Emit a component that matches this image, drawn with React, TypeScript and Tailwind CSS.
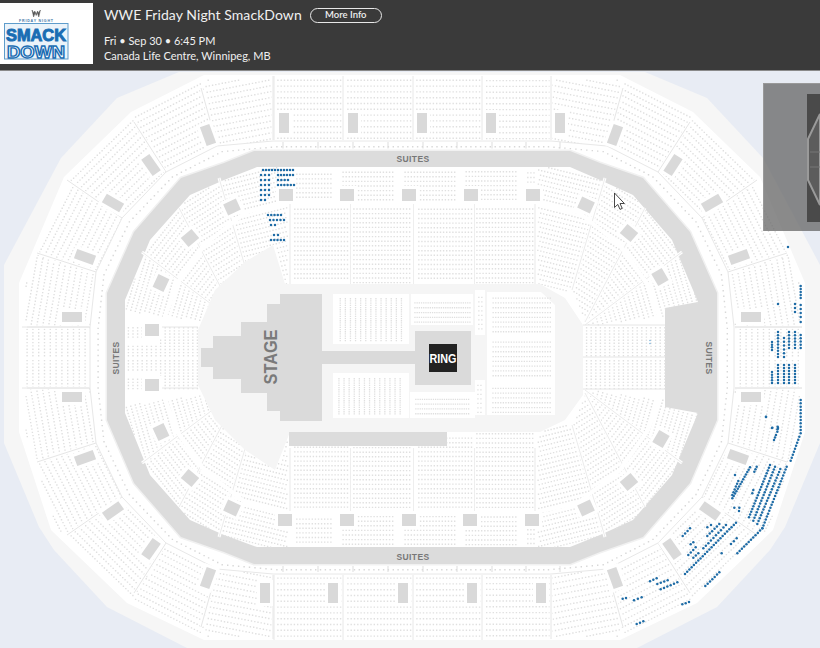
import { useMemo } from "react";

type P = [number, number];

const CX = 412;
const CY = 357.5;

const inPoly = (p: P, poly: P[]) => {
  let inside = false;
  for (let i = 0, j = poly.length - 1; i < poly.length; j = i++) {
    const [xi, yi] = poly[i];
    const [xj, yj] = poly[j];
    if (yi > p[1] !== yj > p[1] && p[0] < ((xj - xi) * (p[1] - yi)) / (yj - yi) + xi) inside = !inside;
  }
  return inside;
};

// rotated seat grid clipped to a polygon
const grid = (poly: P[], angle: number, along: number, across: number): P[] => {
  const rad = (angle * Math.PI) / 180;
  const ux = Math.cos(rad);
  const uy = Math.sin(rad);
  const out: P[] = [];
  const x0 = poly.reduce((s, p) => s + p[0], 0) / poly.length;
  const y0 = poly.reduce((s, p) => s + p[1], 0) / poly.length;
  const r = Math.max(...poly.map((p) => Math.hypot(p[0] - x0, p[1] - y0))) + 6;
  for (let a = -r; a <= r; a += along) {
    for (let b = -r; b <= r; b += across) {
      const p: P = [x0 + a * ux - b * uy, y0 + a * uy + b * ux];
      if (inPoly(p, poly)) out.push(p);
    }
  }
  return out;
};

const rect = (x1: number, y1: number, x2: number, y2: number): P[] => [
  [x1, y1],
  [x2, y1],
  [x2, y2],
  [x1, y2],
];

const pts = (poly: P[]) => poly.map((p) => p.join(",")).join(" ");

const mirrorRight = (half: P[]): P[] => [...half, ...[...half].reverse().map((p): P => [2 * CX - p[0], p[1]])];

// outline of the arena, clockwise from the top
const outerBand = mirrorRight([
  [645, 72],
  [707, 98],
  [763, 158],
  [820, 265],
  [820, 443],
  [785, 527],
  [770, 550],
  [717, 607],
  [637, 648],
]);
const seatArea = mirrorRight([
  [620, 75],
  [693, 112],
  [760, 177],
  [805, 283],
  [805, 432],
  [773, 530],
  [697, 603],
  [620, 640],
]);
const boxOuter = mirrorRight([
  [551, 141],
  [607, 146],
  [658, 172],
  [702, 218],
  [728, 272],
  [734, 327],
  [734, 388],
  [728, 443],
  [702, 497],
  [658, 543],
  [607, 569],
  [551, 574],
]);
const ringOuter = mirrorRight([
  [570, 151],
  [600, 163],
  [643, 178],
  [690, 232],
  [717, 293],
  [717, 420],
  [690, 483],
  [643, 537],
  [600, 552],
  [570, 564],
]);
const ringInner: P[] = [
  [257, 167],
  [570, 167],
  [600, 180],
  [633, 195],
  [672, 240],
  [698, 302],
  [665, 308],
  [665, 407],
  [698, 413],
  [672, 475],
  [633, 520],
  [600, 535],
  [570, 547],
  [257, 547],
  [224, 535],
  [190, 520],
  [150, 475],
  [125, 413],
  [125, 300],
  [150, 240],
  [190, 195],
  [224, 180],
];
const floor: P[] = [
  [273, 245],
  [285, 284],
  [540, 284],
  [565, 298],
  [583, 325],
  [583, 395],
  [565, 420],
  [540, 432],
  [290, 432],
  [275, 470],
  [245, 450],
  [215, 420],
  [198, 385],
  [198, 330],
  [215, 290],
  [245, 262],
];

const upperWedges: [P[], number][] = [
  [[[551, 60], [623, 80], [607, 150], [551, 150]], 11],
  [[[623, 80], [695, 110], [658, 172], [607, 150]], 27],
  [[[695, 110], [765, 175], [702, 218], [658, 172]], 44],
  [[[765, 175], [800, 253], [728, 272], [702, 218]], 63],
  [[[800, 253], [812, 327], [735, 327], [728, 272]], 80],
  [[[735, 328], [812, 328], [812, 358], [735, 358]], 90],
];
const upperFlat: P[][] = [rect(275, 70, 342, 140), rect(345, 70, 412, 140), rect(414, 70, 481, 140), rect(484, 70, 550, 140)];

const lowerWedges: [P[], number][] = [
  [[[537, 165], [605, 175], [572, 290], [537, 290]], 14],
  [[[605, 175], [645, 205], [585, 322], [572, 290]], 32],
  [[[645, 205], [682, 250], [585, 325], [585, 322]], 52],
  [[[682, 250], [702, 310], [585, 326], [585, 325]], 74],
  [[[583, 326], [702, 326], [702, 358], [583, 358]], 90],
];
const lowerFlat: P[][] = [
  rect(295, 170, 332, 200),
  rect(340, 170, 393, 200),
  rect(402, 170, 455, 200),
  rect(463, 170, 517, 200),
  rect(525, 170, 536, 200),
  rect(291, 206, 349, 282),
  rect(353, 206, 412, 282),
  rect(415, 206, 473, 282),
  rect(476, 206, 535, 282),
];

const upperSpokes: [P, P][] = [
  [[551, 76], [551, 140]],
  [[623, 88], [607, 145]],
  [[690, 122], [658, 172]],
  [[757, 180], [702, 218]],
  [[787, 253], [728, 272]],
  [[802, 327], [735, 327]],
];
const flatSpokes = [274, 343, 413, 482];
const lowerSpokes: [P, P][] = [
  [[605, 178], [572, 290]],
  [[645, 208], [585, 322]],
  [[682, 252], [585, 325]],
];

// the four quarters of a mirrored line
const quarters = ([a, b]: [P, P]): [P, P][] => [
  [a, b],
  [[2 * CX - a[0], a[1]], [2 * CX - b[0], b[1]]],
  [[a[0], 2 * CY - a[1]], [b[0], 2 * CY - b[1]]],
  [[2 * CX - a[0], 2 * CY - a[1]], [2 * CX - b[0], 2 * CY - b[1]]],
];

const crossAisle: P[] = [
  [536, 203],
  [578, 212],
  [620, 245],
  [648, 285],
  [662, 325],
];

// x, y, rotation, wide
const bowlBlocks: [number, number, number, number][] = [
  [284, 123, 0, 0],
  [353, 123, 0, 0],
  [422, 123, 0, 0],
  [491, 123, 0, 0],
  [560, 123, 0, 0],
  [265, 593, 0, 0],
  [333, 593, 0, 0],
  [403, 593, 0, 0],
  [472, 593, 0, 0],
  [541, 593, 0, 0],
  [208, 135, -20, 0],
  [151, 165, -35, 0],
  [113, 203, 30, 1],
  [85, 257, 20, 1],
  [72, 317, 0, 1],
  [72, 397, 0, 1],
  [85, 458, -20, 1],
  [113, 511, -35, 1],
  [151, 549, 35, 0],
  [208, 578, 20, 0],
  [615, 135, 20, 0],
  [673, 165, 33, 0],
  [712, 203, -30, 1],
  [739, 257, -20, 1],
  [751, 317, 0, 1],
  [751, 397, 0, 1],
  [738, 457, 20, 1],
  [710, 511, 35, 1],
  [672, 549, -35, 0],
  [615, 578, -20, 0],
];
const bowlInnerBlocks: [number, number, number][] = [
  [286, 195, 0],
  [347, 195, 0],
  [409, 195, 0],
  [471, 195, 0],
  [533, 195, 0],
  [285, 520, 0],
  [347, 520, 0],
  [409, 520, 0],
  [470, 520, 0],
  [532, 520, 0],
  [232, 207, -25],
  [190, 238, -40],
  [161, 283, -65],
  [152, 330, 0],
  [152, 385, 0],
  [161, 432, 65],
  [190, 478, 40],
  [232, 508, 25],
  [586, 205, 25],
  [629, 233, 40],
  [660, 277, 60],
  [661, 439, -60],
  [629, 482, -40],
  [586, 508, -25],
];

const tickXs = [283, 318, 353, 388, 423, 457, 492, 526, 560];

const run = (x1: number, y1: number, x2: number, y2: number, n: number): P[] =>
  Array.from({ length: n }, (_, i): P => {
    const t = n === 1 ? 0 : i / (n - 1);
    return [x1 + (x2 - x1) * t, y1 + (y2 - y1) * t];
  });

// coordinates read from the 3x crop of the lower right corner
const z4 = (x1: number, y1: number, x2: number, y2: number, n: number) =>
  run(600 + x1 / 3, 400 + y1 / 3, 600 + x2 / 3, 400 + y2 / 3, n);

const blueSeats: P[] = [
  ...run(263, 170, 293, 170, 11),
  ...run(261, 175, 269, 175, 3),
  ...run(278, 175, 293, 175, 6),
  ...run(261, 180, 269, 180, 3),
  ...run(278, 180, 288, 180, 4),
  ...run(261, 185, 269, 185, 3),
  ...run(278, 185, 294, 185, 6),
  ...run(261, 190, 269, 190, 3),
  ...run(261, 195, 269, 195, 3),
  ...run(261, 200, 265, 200, 2),
  ...run(268, 215, 281, 215, 5),
  ...run(270, 220, 284, 220, 5),
  ...run(271, 225, 275, 225, 2),
  ...run(274, 235, 278, 235, 2),
  ...run(271, 240, 284, 240, 5),
  ...run(788, 247, 788, 247, 1),
  ...run(800.7, 286, 800.7, 298, 5),
  ...run(800.7, 305, 800.7, 317, 4),
  ...run(800.7, 322, 800.7, 322, 1),
  ...run(795, 304, 795, 312, 3),
  ...run(778, 304, 778, 304, 1),
  ...run(778, 332, 778, 357, 9),
  ...run(772, 342, 772, 350, 4),
  ...run(784, 338, 784, 357, 6),
  ...run(789, 332, 789, 348, 6),
  ...run(795, 332, 795, 348, 6),
  ...run(800.7, 335, 800.7, 348, 5),
  ...run(772, 372, 772, 383, 5),
  ...run(778, 365, 778, 383, 7),
  ...run(784, 365, 784, 383, 7),
  ...run(789, 365, 789, 383, 7),
  ...run(795, 365, 795, 383, 7),
  ...run(766, 417, 766, 417, 1),
  ...run(772, 428, 778, 428, 2),
  ...z4(602, 0, 602, 100, 11),
  ...z4(598, 110, 572, 182, 9),
  ...z4(498, 50, 498, 50, 1),
  ...z4(517, 83, 517, 83, 1),
  ...z4(533, 80, 532, 95, 3),
  ...z4(528, 105, 522, 120, 3),
  ...z4(510, 195, 447, 352, 20),
  ...z4(525, 200, 460, 362, 20),
  ...z4(541, 207, 472, 372, 20),
  ...z4(560, 200, 487, 385, 22),
  ...z4(470, 200, 463, 215, 3),
  ...z4(450, 202, 397, 295, 14),
  ...z4(415, 243, 397, 285, 6),
  ...z4(405, 225, 405, 225, 1),
  ...z4(403, 323, 403, 323, 1),
  ...z4(418, 323, 417, 333, 2),
  ...z4(460, 270, 457, 280, 2),
  ...z4(487, 385, 412, 460, 12),
  ...z4(408, 368, 255, 522, 24),
  ...z4(378, 375, 310, 445, 10),
  ...z4(358, 372, 322, 408, 6),
  ...z4(333, 375, 322, 382, 2),
  ...z4(270, 385, 248, 408, 4),
  ...z4(280, 427, 272, 433, 2),
  ...z4(287, 442, 265, 465, 4),
  ...z4(295, 460, 280, 473, 3),
  ...z4(410, 415, 393, 432, 3),
  ...z4(365, 460, 365, 460, 1),
  ...z4(358, 517, 316, 558, 7),
  ...z4(150, 544, 170, 535, 3),
  ...z4(172, 552, 203, 541, 4),
  ...z4(182, 568, 232, 547, 6),
  ...z4(68, 596, 78, 594, 2),
  ...z4(102, 601, 125, 592, 3),
  ...z4(247, 613, 267, 606, 3),
  ...z4(110, 672, 130, 664, 3),
];

const toPath = (list: P[], size: number) =>
  list
    .map(([x, y]) => `M${x.toFixed(1)} ${y.toFixed(1)}h${size}v${size}h-${size}z`)
    .join("");

const mirrorAll = (list: P[]): P[] =>
  list.flatMap(([x, y]): P[] => [
    [x, y],
    [2 * CX - x, y],
    [x, 2 * CY - y],
    [2 * CX - x, 2 * CY - y],
  ]);

const mirrorY = (list: P[]): P[] => list.flatMap(([x, y]): P[] => [[x, y], [x, 2 * CY - y]]);

const buildSeats = () => {
  const limit = seatArea.map((p): P => [CX + (p[0] - CX) * 0.985, CY + (p[1] - CY) * 0.985]);
  const upper = [
    ...mirrorAll(upperWedges.flatMap(([poly, a]) => grid(poly, a, 3.3, 5.8))),
    ...mirrorY(upperFlat.flatMap((poly) => grid(poly, 0, 3.3, 5.8))),
  ].filter((p) => inPoly(p, limit) && !inPoly(p, boxOuter));
  const lower = [
    ...mirrorAll(lowerWedges.flatMap(([poly, a]) => grid(poly, a, 3.1, 4.6))),
    ...mirrorY(lowerFlat.flatMap((poly) => grid(poly, 0, 3.1, 4.6))),
  ].filter((p) => inPoly(p, ringInner) && !inPoly(p, floor));
  const mid = boxOuter.map((p): P => [CX + (p[0] - CX) * 0.977, CY + (p[1] - CY) * 0.977]);
  const box: P[] = [];
  mid.forEach((a, i) => {
    const b = mid[(i + 1) % mid.length];
    const n = Math.round(Math.hypot(b[0] - a[0], b[1] - a[1]) / 4.8);
    box.push(...run(a[0], a[1], b[0], b[1], n));
  });
  const floorSeats = [
    ...grid(rect(338, 298, 404, 340), 90, 2.2, 5.1),
    ...grid(rect(338, 377, 404, 414), 90, 2.2, 5.1),
    ...grid(rect(414, 298, 470, 322), 0, 2.2, 4.8),
    ...grid(rect(414, 396, 470, 415), 0, 2.2, 4.8),
    ...grid(rect(491, 296, 551, 334), 0, 2.6, 4.8),
    ...grid(rect(491, 340, 551, 378), 0, 2.6, 4.8),
    ...grid(rect(491, 384, 551, 412), 0, 2.6, 4.8),
    ...grid(rect(477, 294, 483, 332), 90, 4.5, 3),
    ...grid(rect(477, 382, 483, 412), 90, 4.5, 3),
  ];
  return {
    upperSeats: toPath(upper, 1.4),
    lowerSeats: toPath(lower, 1.4),
    boxSeats: toPath(box, 1.4),
    floorSeats: toPath(floorSeats, 1.3),
  };
};

function SmackDownLogo() {
  return (
    <div className="w-[93px] h-[61px] bg-white shrink-0">
      <svg width="93" height="61" viewBox="0 3 93 61" className="font-['Liberation_Sans',sans-serif]">
        <path d="M32 10l1.6 7 1.6-4.5 1 3 1-3 1.6 4.5 1.6-7-1.8 3-1-2-1.4 3.5-1.4-3.5-1 2z" fill="#555" stroke="#555" strokeWidth="0.5" />
        <text x="36" y="21.5" textAnchor="middle" fontSize="3.6" fontWeight="700" fill="#3f78a8" textLength="34">
          FRIDAY NIGHT
        </text>
        <rect x="4.5" y="23.5" width="63.5" height="35.5" fill="#eaf3fa" stroke="#5e9ccb" strokeWidth="1" />
        <text x="36" y="40.5" textAnchor="middle" fontSize="17" fontWeight="700" fill="#1a6db3" stroke="#1a6db3" strokeWidth="1" textLength="60" lengthAdjust="spacingAndGlyphs">
          SMACK
        </text>
        <text x="36" y="57.5" textAnchor="middle" fontSize="16" fontWeight="700" fill="#ffffff" stroke="#1a6db3" strokeWidth="1.3" textLength="58" lengthAdjust="spacingAndGlyphs">
          DOWN
        </text>
      </svg>
    </div>
  );
}

function Header() {
  return (
    <header className="h-[71px] shrink-0 bg-[#3a3a3a] flex items-start pt-[3px] border-b border-[#8a8a8a] font-['Lato',sans-serif] text-[#f0f0f0]">
      <SmackDownLogo />
      <div className="ml-[11px] flex flex-col">
        <div className="flex items-center gap-2 h-6">
          <h1 className="text-[14px] leading-5 tracking-[0.07px] font-normal">WWE Friday Night SmackDown</h1>
          <button className="w-[72px] h-[15px] rounded-full border border-[#e8e8e8] text-[9.5px] leading-3 font-semibold flex items-center justify-center">
            More Info
          </button>
        </div>
        <p className="mt-[6px] text-[11px] leading-[15px]">Fri • Sep 30 • 6:45 PM</p>
        <p className="text-[11px] leading-[15px]">Canada Life Centre, Winnipeg, MB</p>
      </div>
    </header>
  );
}

function MiniMap() {
  return (
    <div className="absolute right-0 top-[12px] w-[57px] h-[148px] bg-[#666666]/75 border-l border-t border-[#999999] flex items-center justify-end">
      <div className="w-[13px] h-[128px] bg-[#4a4a4a]">
        <svg width="13" height="128" viewBox="807 92 13 128">
          <polygon points="820,112 808,137 808,178 820,203" fill="#5c5c5c" stroke="#9a9a9a" strokeWidth="2" />
          <path d="M810 150h10M810 165h10" stroke="#777" strokeWidth="1" />
        </svg>
      </div>
    </div>
  );
}

const mirrored = (line: P[]): P[][] => [
  line,
  line.map((p): P => [2 * CX - p[0], p[1]]),
  line.map((p): P => [p[0], 2 * CY - p[1]]),
  line.map((p): P => [2 * CX - p[0], 2 * CY - p[1]]),
];

function SeatMap() {
  const { upperSeats, lowerSeats, boxSeats, floorSeats } = useMemo(buildSeats, []);
  return (
    <svg width="820" height="577" viewBox="0 71 820 577" className="block font-['Liberation_Sans',sans-serif]">
      <polygon points={pts(outerBand)} fill="#f6f6f6" />
      <polygon points={pts(seatArea)} fill="#ffffff" />
      <path d={upperSeats} fill="#e0e0e0" />

      {/* aisles of the upper bowl */}
      {upperSpokes.flatMap(quarters).map(([a, b], i) => (
        <g key={`u${i}`}>
          <line x1={a[0]} y1={a[1]} x2={b[0]} y2={b[1]} stroke="#ffffff" strokeWidth="3" />
          <line x1={a[0]} y1={a[1]} x2={b[0]} y2={b[1]} stroke="#e6e6e6" strokeWidth="1" />
        </g>
      ))}
      <path d={flatSpokes.map((x) => `M${x} 76V140M${x} 575V640`).join("")} stroke="#e8e8e8" />
      <path d="M27 327H90M27 388H90M735 327H802M735 388H802" stroke="#e6e6e6" />

      {/* box row round the suites */}
      <polygon points={pts(boxOuter)} fill="#ffffff" stroke="#e8e8e8" strokeWidth="1" />
      <path d={boxSeats} fill="#d8d8d8" />
      <polygon points={pts(ringOuter)} fill="#f1f1f1" stroke="#f1f1f1" strokeWidth="3" strokeLinejoin="round" />
      <path d={tickXs.map((x) => `M${x} 142V148.5M${x} 566V572`).join("")} stroke="#dddddd" />

      {/* suites ring */}
      <polygon points={pts(ringOuter)} fill="#dcdcdc" />
      <polygon points={pts(ringInner)} fill="#ffffff" />

      {/* lower bowl */}
      <path d={lowerSeats} fill="#e0e0e0" />
      {lowerSpokes.flatMap(quarters).map(([a, b], i) => (
        <g key={`l${i}`}>
          <line x1={a[0]} y1={a[1]} x2={b[0]} y2={b[1]} stroke="#ffffff" strokeWidth="3" />
          <line x1={a[0]} y1={a[1]} x2={b[0]} y2={b[1]} stroke="#ebebeb" strokeWidth="1" />
        </g>
      ))}
      {mirrored(crossAisle).map((line, i) => (
        <polyline key={i} points={pts(line)} fill="none" stroke="#ffffff" strokeWidth="4" />
      ))}
      <path d="M287 204H536M287 511H536" stroke="#ffffff" strokeWidth="4" />
      <path d="M350.5 204V284M413.5 204V284M474.5 204V284M350.5 448V511M413.5 448V511M474.5 448V511" stroke="#ffffff" strokeWidth="3" />
      <path d="M290 204V284M535 204V284M290 448V511M535 448V511" stroke="#e9e9e9" />
      <path d="M350.5 204V284M413.5 204V284M474.5 204V284M350.5 448V511M413.5 448V511M474.5 448V511" stroke="#eeeeee" />
      <rect x="126" y="338" width="34" height="7" fill="#ffffff" />
      <rect x="126" y="371" width="34" height="7" fill="#ffffff" />
      <path d="M162 327H198M162 388H198M583 325H665M583 357H665M583 389H665" stroke="#e6e6e6" />

      {/* concession blocks */}
      {bowlBlocks.map(([x, y, r, wide], i) => {
        const w = wide ? 20 : 10;
        const h = wide ? 10 : 20;
        return (
          <g key={i} transform={`rotate(${r} ${x} ${y})`}>
            <rect x={x - w / 2 - 3} y={y - h / 2 - 3} width={w + 6} height={h + 6} fill="#ffffff" />
            <rect x={x - w / 2} y={y - h / 2} width={w} height={h} fill="#d9d9d9" />
          </g>
        );
      })}
      {bowlInnerBlocks.map(([x, y, r], i) => (
        <g key={i} transform={`rotate(${r} ${x} ${y})`}>
          <rect x={x - 10} y={y - 9} width="20" height="18" fill="#ffffff" />
          <rect x={x - 7} y={y - 6} width="14" height="12" fill="#d9d9d9" />
        </g>
      ))}

      {/* floor */}
      <polygon points={pts(floor)} fill="#f5f5f5" />
      <rect x="333" y="294" width="76" height="50" fill="#ffffff" />
      <rect x="411" y="294" width="62" height="31" fill="#ffffff" />
      <rect x="333" y="373" width="76" height="45" fill="#ffffff" />
      <rect x="410" y="392" width="65" height="26" fill="#ffffff" />
      <rect x="475" y="290" width="10" height="45" fill="#ffffff" />
      <rect x="475" y="380" width="10" height="35" fill="#ffffff" />
      <polygon points="487,292 541,292 555,305 555,415 487,415" fill="#ffffff" />
      <path d={floorSeats} fill="#dfdfdf" />
      <rect x="289" y="432" width="158" height="14" fill="#dcdcdc" />

      {/* stage and walkway */}
      <g fill="#dadada">
        <rect x="280" y="294" width="42" height="127" />
        <rect x="267" y="304" width="13" height="107" />
        <rect x="241" y="322" width="26" height="71" />
        <rect x="213" y="336" width="28" height="43" />
        <rect x="201" y="348" width="12" height="19" />
        <rect x="322" y="351" width="93" height="13" />
        <rect x="415" y="331" width="56" height="54" />
      </g>
      <rect x="429" y="344" width="28" height="28" fill="#222222" />
      <text x="443" y="363" textAnchor="middle" fontSize="13" fontWeight="700" fill="#ffffff" textLength="27" lengthAdjust="spacingAndGlyphs">
        RING
      </text>
      <text transform="translate(277 357) rotate(-90)" textAnchor="middle" fontSize="17.5" fontWeight="700" fill="#7a7a7a" textLength="55" lengthAdjust="spacingAndGlyphs">
        STAGE
      </text>

      <g fontSize="8.5" fontWeight="700" fill="#777777" textAnchor="middle" letterSpacing="0.4">
        <text x="413" y="162">SUITES</text>
        <text x="413" y="560">SUITES</text>
        <text transform="translate(119 358) rotate(-90)">SUITES</text>
        <text transform="translate(706 358) rotate(90)">SUITES</text>
      </g>

      {/* available seats */}
      <g fill="#1f6ca6">
        {blueSeats.map(([x, y], i) => (
          <circle key={i} cx={x} cy={y} r="1.25" />
        ))}
      </g>
      <circle cx="650" cy="340.5" r="0.8" fill="#7db4dc" />
      <circle cx="650" cy="343.5" r="0.8" fill="#7db4dc" />

      {/* mouse pointer */}
      <path d="M614.5 193v14.5l3.3-3.1 2.2 5 2.2-1-2.2-4.9h4.4z" fill="#ffffff" stroke="#333333" strokeWidth="0.9" />
    </svg>
  );
}

export default function App() {
  return (
    <div className="w-[820px] h-[648px] overflow-hidden flex flex-col bg-[#e8ecf4]">
      <Header />
      <main className="relative flex-1">
        <SeatMap />
        <MiniMap />
      </main>
    </div>
  );
}
